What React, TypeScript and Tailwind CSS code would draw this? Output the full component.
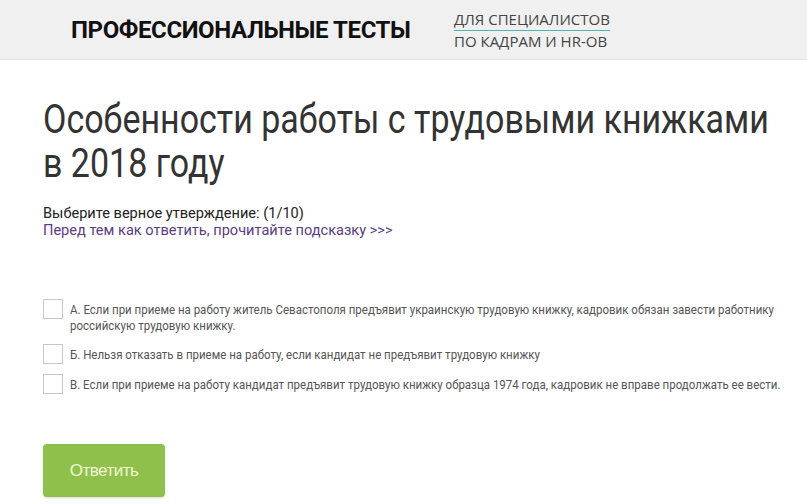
const options = [
  "А. Если при приеме на работу житель Севастополя предъявит украинскую трудовую книжку, кадровик обязан завести работнику российскую трудовую книжку.",
  "Б. Нельзя отказать в приеме на работу, если кандидат не предъявит трудовую книжку",
  "В. Если при приеме на работу кандидат предъявит трудовую книжку образца 1974 года, кадровик не вправе продолжать ее вести.",
];

// Roboto squeezed horizontally stands in for the condensed face
const Header = () => (
  <header className="h-[60px] bg-[#f0f0f1] border-b border-[#e2e2e2] flex items-center">
    <div className="pl-[71px] w-[454px] font-['Roboto',sans-serif] font-bold text-[24px] text-[#111] tracking-[-0.4px] whitespace-nowrap">
      ПРОФЕССИОНАЛЬНЫЕ ТЕСТЫ
    </div>
    <div className="font-['Open_Sans',sans-serif] text-[15px] leading-[20px] text-[#444] pt-[1px] whitespace-nowrap">
      <div className="border-b border-[#4cb8b0] pb-[1px]">ДЛЯ СПЕЦИАЛИСТОВ</div>
      <div>ПО КАДРАМ И HR-ОВ</div>
    </div>
  </header>
);

export default function App() {
  return (
    <div className="w-[807px] h-[504px] bg-white overflow-hidden font-['Roboto',sans-serif]">
      <Header />
      <main className="px-[43px]">
        <h1 className="mt-[38px] w-[900px] origin-left scale-x-[0.85] text-[40px] leading-[44px] text-[#333] font-normal">
          Особенности работы с трудовыми книжками
          <br />в 2018 году
        </h1>
        <div className="mt-[19px] origin-left scale-x-[0.94] whitespace-nowrap text-[15.5px] leading-[17px]">
          <p className="text-[#222]">Выберите верное утверждение: (1/10)</p>
          <p className="text-[#5a3d85]">Перед тем как ответить, прочитайте подсказку &gt;&gt;&gt;</p>
        </div>
        <ul className="mt-[60px] flex flex-col gap-[10px]">
          {options.map((text) => (
            <li key={text} className="flex items-start gap-[7px]">
              <span className="shrink-0 w-[20px] h-[20px] border border-[#c8c8c8] bg-white" />
              <span className="shrink-0 w-[820px] pt-[3px] origin-left scale-x-[0.885] text-[13px] leading-[16px] text-[#555]">
                {text}
              </span>
            </li>
          ))}
        </ul>
        <button className="mt-[50px] w-[122px] h-[53px] rounded-[4px] bg-[#8fc04b] text-[#f0f8d4] font-['Liberation_Sans',sans-serif] text-[17px] tracking-[-0.5px] shadow-[0_1px_2px_rgba(0,0,0,0.15)]">
          Ответить
        </button>
      </main>
    </div>
  );
}
